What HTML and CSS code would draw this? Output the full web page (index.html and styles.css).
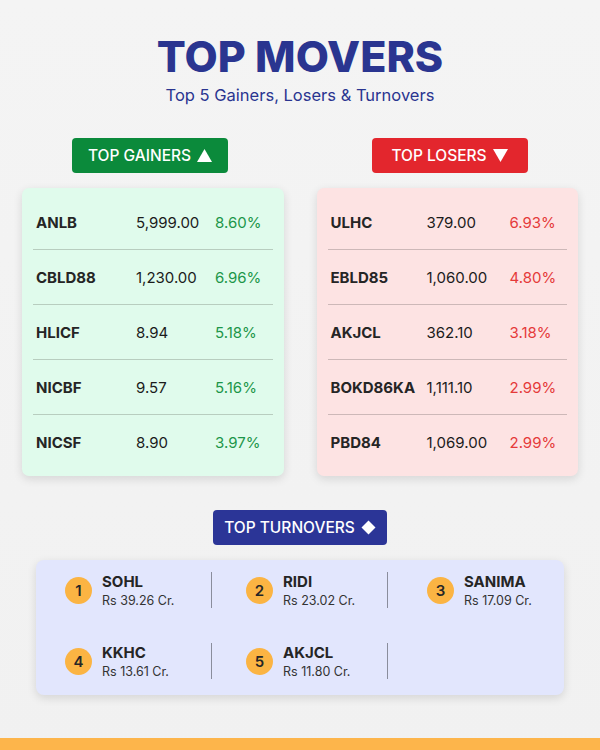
FILE: index.html
```html
<!DOCTYPE html>
<html lang="en">
<head>
<meta charset="utf-8">
<title>Top Movers</title>
<link rel="stylesheet" href="styles.css">
</head>
<body>
<main class="page">
  <header class="hero">
    <h1 class="title">TOP MOVERS</h1>
    <p class="subtitle">Top 5 Gainers, Losers &amp; Turnovers</p>
  </header>

  <section class="movers">
    <div class="col col-left">
      <div class="tag tag-green">TOP GAINERS
        <svg class="ico" width="15" height="13" viewBox="0 0 15 13"><path d="M7.5 0L15 13H0Z" fill="#fff"/></svg>
      </div>
      <div class="card card-green">
        <div class="row"><span class="sym">ANLB</span><span class="price">5,999.00</span><span class="pct">8.60%</span></div>
        <div class="row"><span class="sym">CBLD88</span><span class="price">1,230.00</span><span class="pct">6.96%</span></div>
        <div class="row"><span class="sym">HLICF</span><span class="price">8.94</span><span class="pct">5.18%</span></div>
        <div class="row"><span class="sym">NICBF</span><span class="price">9.57</span><span class="pct">5.16%</span></div>
        <div class="row"><span class="sym">NICSF</span><span class="price">8.90</span><span class="pct">3.97%</span></div>
      </div>
    </div>
    <div class="col col-right">
      <div class="tag tag-red">TOP LOSERS
        <svg class="ico" width="15" height="13" viewBox="0 0 15 13"><path d="M0 0H15L7.5 13Z" fill="#fff"/></svg>
      </div>
      <div class="card card-red">
        <div class="row"><span class="sym">ULHC</span><span class="price">379.00</span><span class="pct">6.93%</span></div>
        <div class="row"><span class="sym">EBLD85</span><span class="price">1,060.00</span><span class="pct">4.80%</span></div>
        <div class="row"><span class="sym">AKJCL</span><span class="price">362.10</span><span class="pct">3.18%</span></div>
        <div class="row"><span class="sym">BOKD86KA</span><span class="price">1,111.10</span><span class="pct">2.99%</span></div>
        <div class="row"><span class="sym">PBD84</span><span class="price">1,069.00</span><span class="pct">2.99%</span></div>
      </div>
    </div>
  </section>

  <section class="turnovers">
    <div class="tag tag-blue">TOP TURNOVERS
      <svg class="ico" width="15" height="15" viewBox="0 0 15 15"><path d="M7.5 0.5L14.5 7.5L7.5 14.5L0.5 7.5Z" fill="#fff"/></svg>
    </div>
    <div class="tcard">
      <div class="cell c1"><div class="item"><span class="num">1</span><div class="info"><div class="tname">SOHL</div><div class="tval">Rs 39.26 Cr.</div></div></div></div>
      <div class="cell c2"><div class="item"><span class="num">2</span><div class="info"><div class="tname">RIDI</div><div class="tval">Rs 23.02 Cr.</div></div></div></div>
      <div class="cell c3"><div class="item"><span class="num">3</span><div class="info"><div class="tname">SANIMA</div><div class="tval">Rs 17.09 Cr.</div></div></div></div>
      <div class="cell c1"><div class="item"><span class="num">4</span><div class="info"><div class="tname">KKHC</div><div class="tval">Rs 13.61 Cr.</div></div></div></div>
      <div class="cell c2"><div class="item"><span class="num">5</span><div class="info"><div class="tname">AKJCL</div><div class="tval">Rs 11.80 Cr.</div></div></div></div>
      <div class="cell c3"></div>
    </div>
  </section>

  <footer class="bar"></footer>
</main>
</body>
</html>
```

FILE: styles.css
```css
* { box-sizing: border-box; }

html, body {
  margin: 0;
  padding: 0;
}

body {
  background: #f2f2f2;
  font-family: "Inter", "Open Sans", sans-serif;
  color: #222;
}

.page {
  width: 600px;
  height: 750px;
  display: flex;
  flex-direction: column;
  background: linear-gradient(180deg, #f4f4f4 0%, #f1f1f1 100%);
}

.hero {
  text-align: center;
  padding-top: 33px;
}

.title {
  margin: 0;
  font-size: 43px;
  line-height: 46px;
  font-weight: 800;
  color: #2a3590;
  letter-spacing: 0;
}

.subtitle {
  margin: 6px 0 0;
  font-size: 16.5px;
  line-height: 20px;
  color: #2a3590;
}

.movers {
  display: flex;
  gap: 33px;
  padding: 0 22px;
  margin-top: 33px;
}

.col {
  flex: 1;
  display: flex;
  flex-direction: column;
  gap: 15px;
}

.col-left .tag { margin-left: 50px; }
.col-right .tag { margin-left: 55px; }

.tag {
  height: 35px;
  display: flex;
  align-items: center;
  justify-content: center;
  gap: 6px;
  border-radius: 4px;
  color: #fff;
  font-size: 15.5px;
  font-weight: 500;
  white-space: nowrap;
}

.tag-green { background: #0b8a3b; width: 156px; }
.tag-red { background: #e3262d; width: 156px; }
.tag-blue { background: #2b3597; width: 174px; }

.ico { display: block; flex: none; }

.card {
  border-radius: 7px;
  padding: 7px 11px 6px;
  box-shadow: 0 3px 10px rgba(0, 0, 0, 0.12);
}

.card-green { background: #e0fbec; }
.card-red { background: #fde3e3; }

.row {
  display: grid;
  height: 55px;
  align-items: center;
  padding-left: 3px;
  font-size: 15px;
  border-bottom: 1px solid #b8cdbf;
}

.card-red .row { border-bottom-color: #cdb8b8; }

.row:last-child { border-bottom: none; }

.card-green .row { grid-template-columns: 100px 79px 1fr; }
.card-red .row { grid-template-columns: 96px 83px 1fr; }

.sym { font-weight: 700; color: #252525; }
.price { color: #1b1b1b; }
.card-green .pct { color: #1c9649; }
.card-red .pct { color: #e53a3a; }

.turnovers {
  display: flex;
  flex-direction: column;
  align-items: center;
  gap: 15px;
  margin-top: 34px;
}

.tcard {
  width: 528px;
  background: #e2e6fd;
  border-radius: 8px;
  padding: 12px 0 16px;
  display: grid;
  grid-template-columns: repeat(3, 1fr);
  row-gap: 35px;
  box-shadow: 0 3px 10px rgba(0, 0, 0, 0.12);
}

.cell {
  height: 36px;
  display: flex;
  align-items: center;
  border-right: 1px solid #8a8d9c;
}

.c1 { padding-left: 29px; }
.c2 { padding-left: 34px; }
.c3 { padding-left: 39px; border-right: none; }

.item {
  display: flex;
  align-items: center;
  gap: 10px;
}

.num {
  width: 27px;
  height: 27px;
  border-radius: 50%;
  background: #fbb443;
  display: flex;
  align-items: center;
  justify-content: center;
  font-size: 15px;
  font-weight: 600;
  color: #262626;
}

.tname {
  font-size: 15px;
  line-height: 20px;
  font-weight: 700;
  color: #252525;
}

.tval {
  font-size: 12.5px;
  line-height: 17px;
  color: #333;
}

.bar {
  margin-top: auto;
  height: 12px;
  background: #fdb54b;
}
```
